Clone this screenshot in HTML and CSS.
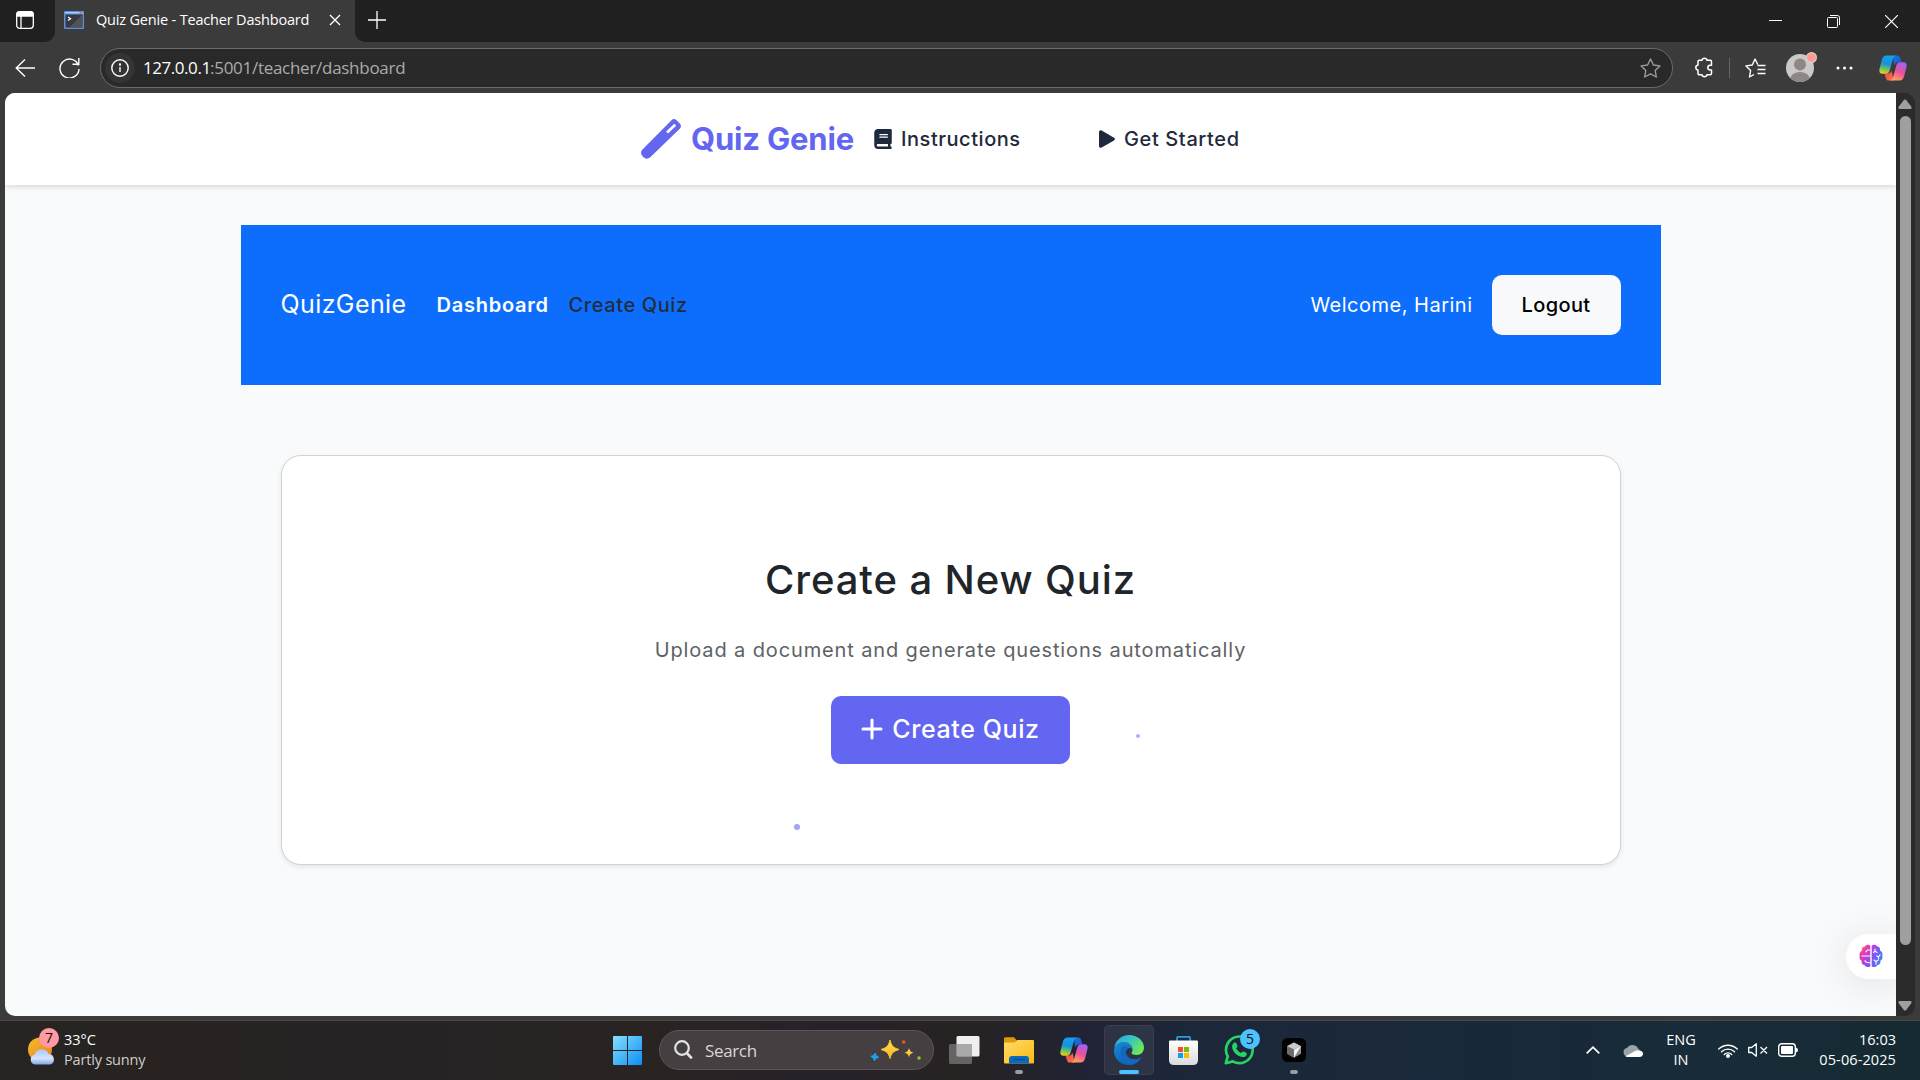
FILE: index.html
```html
<!DOCTYPE html>
<html lang="en">
<head>
<meta charset="utf-8">
<title>Quiz Genie - Teacher Dashboard</title>
<link rel="stylesheet" href="styles.css">
</head>
<body>
<svg class="defs" width="0" height="0" aria-hidden="true">
  <defs>
    <linearGradient id="cpBlue" x1="0.5" y1="0" x2="0.3" y2="1"><stop offset="0" stop-color="#14a0ef"/><stop offset=".45" stop-color="#1791dc"/><stop offset=".7" stop-color="#58bd72"/><stop offset="1" stop-color="#f3cd18"/></linearGradient>
    <linearGradient id="cpPink" x1="0.7" y1="0" x2="0.3" y2="1"><stop offset="0" stop-color="#a163f2"/><stop offset=".5" stop-color="#ec4f9c"/><stop offset="1" stop-color="#ffa35c"/></linearGradient>
    <linearGradient id="cpTop" x1="0" y1="0" x2="1" y2="1"><stop offset="0" stop-color="#1479dc"/><stop offset="1" stop-color="#2450d0"/></linearGradient>
    <linearGradient id="cpBot" x1="0" y1="0" x2="1" y2="1"><stop offset="0" stop-color="#e93d52"/><stop offset="1" stop-color="#ff7a3c"/></linearGradient>
    <linearGradient id="win" x1="0" y1="0" x2="1" y2="1"><stop offset="0" stop-color="#85e0fc"/><stop offset="1" stop-color="#0b8ef6"/></linearGradient>
    <linearGradient id="sun" x1="0" y1="0" x2="1" y2="1"><stop offset="0" stop-color="#f5bd2f"/><stop offset="1" stop-color="#ee7d16"/></linearGradient>
    <linearGradient id="cloud" x1="0" y1="0" x2="0" y2="1"><stop offset="0" stop-color="#a9c6f5"/><stop offset=".6" stop-color="#d6e4fb"/><stop offset="1" stop-color="#7fa6e8"/></linearGradient>
    <linearGradient id="folder" x1="0" y1="0" x2="1" y2="1"><stop offset="0" stop-color="#ffdc69"/><stop offset="1" stop-color="#fbba12"/></linearGradient>
    <linearGradient id="edgeTop" x1="0" y1="0" x2="1" y2=".6"><stop offset="0" stop-color="#2aa7e0"/><stop offset=".5" stop-color="#35c4c4"/><stop offset="1" stop-color="#6bea56"/></linearGradient>
    <linearGradient id="edgeBot" x1="0" y1="0" x2=".7" y2="1"><stop offset="0" stop-color="#1b88dc"/><stop offset="1" stop-color="#0d5cb0"/></linearGradient>
    <linearGradient id="bag" x1="0" y1="0" x2="0" y2="1"><stop offset="0" stop-color="#ffffff"/><stop offset="1" stop-color="#d9dadd"/></linearGradient>
    <linearGradient id="brainL" x1="0" y1="0" x2=".6" y2="1"><stop offset="0" stop-color="#ffa21c"/><stop offset=".4" stop-color="#f038b0"/><stop offset="1" stop-color="#8a4df5"/></linearGradient>
    <linearGradient id="brainR" x1="0" y1="0" x2="1" y2="1"><stop offset="0" stop-color="#c23fe0"/><stop offset=".5" stop-color="#6a60f5"/><stop offset="1" stop-color="#2aa4ff"/></linearGradient>
    <linearGradient id="gold" x1="0" y1="0" x2="0" y2="1"><stop offset="0" stop-color="#ffe25a"/><stop offset="1" stop-color="#fbb41a"/></linearGradient>
    <symbol id="copilot" viewBox="0 0 28 26">
      <path d="M14 0.5h4.2c1.6 0 2.5 1 3 2.6l1.4 4.4h-3.5c-2 0-2.900 1-3.500 3l-1-4z" fill="url(#cpTop)"/>
      <path d="M14 25.500H9.800c-1.600 0-2.500-1-3-2.600L5.400 18.500H9c2 0 2.900-1 3.500-3l1 4z" fill="url(#cpBot)"/>
      <path d="M7.500.5H17c-1.800.3-2.600 1.900-3.200 4l-3 10.500c-.7 2.500-1.800 3.700-4 3.700H3.500C1 18.700-.1 17 .5 14L2.800 5C3.600 2 5 .5 7.500.5Z" fill="url(#cpBlue)"/>
      <path d="M20.500 25.500H11c1.800-.3 2.600-1.900 3.200-4l3-10.500c.7-2.500 1.800-3.700 4-3.700h3.300c2.500 0 3.600 1.700 3 4.700L25.200 21c-.8 3-2.200 4.500-4.700 4.500Z" fill="url(#cpPink)"/>
    </symbol>
  </defs>
</svg>

<div class="titlebar">
  <div class="tab-actions">
    <svg width="18" height="18" viewBox="0 0 18 18" fill="none" stroke="#fff" stroke-width="1.300"><rect x=".7" y=".7" width="16.600" height="16.600" rx="3"/><path d="M1 2.500Q1 1 3 1H15Q17 1 17 2.500V5H1Z" fill="#fff"/><path d="M5 5v12"/></svg>
  </div>
  <div class="tab">
    <svg width="20" height="18" viewBox="0 0 20 18"><rect width="20" height="18" rx="1" fill="#5b8fdc"/><rect x="1" y="1" width="18" height="1.500" fill="#a4cbf5"/><rect x="15.500" y="1" width="2.500" height="1.500" fill="#e35b4c"/><rect x="1.500" y="3.500" width="17" height="13" fill="#363a40"/><path d="M18.500 3.500v13h-13z" fill="#505358"/><path d="M4 6l2.500 1.800L4 9.500" fill="none" stroke="#fff" stroke-width="1.300"/></svg>
    <span class="tab-title">Quiz Genie - Teacher Dashboard</span>
    <svg class="tab-close" width="12" height="12" viewBox="0 0 12 12" stroke="#fff" stroke-width="1.400"><path d="M1 1l10 10M11 1L1 11"/></svg>
  </div>
  <svg class="new-tab" width="18" height="18" viewBox="0 0 18 18" stroke="#fff" stroke-width="1.300"><path d="M9 0v18M0 9h18"/></svg>
  <div class="window-buttons">
    <svg width="13" height="13" viewBox="0 0 13 13" stroke="#fff" stroke-width="1"><path d="M0 5.500h13"/></svg>
    <svg width="13" height="13" viewBox="0 0 13 13" fill="none" stroke="#fff" stroke-width="1"><rect x=".5" y="2.500" width="10" height="10" rx="1"/><path d="M3 .5h7.500a2 2 0 0 1 2 2V10"/></svg>
    <svg width="13" height="13" viewBox="0 0 13 13" stroke="#fff" stroke-width="1.200"><path d="M0 0l13 13M13 0L0 13"/></svg>
  </div>
</div>

<div class="toolbar">
  <svg class="back" width="20" height="20" viewBox="0 0 20 20" fill="none" stroke="#fff" stroke-width="1.400"><path d="M20 10H1M10 1.500L1.200 10l8.800 8.500"/></svg>
  <svg class="reload" width="21" height="21" viewBox="0 0 21 21" fill="none" stroke="#fff" stroke-width="1.400"><path d="M19.500 8.500A9.500 9.500 0 1 0 20 12M19.800 1v6.300h-6.300"/></svg>
  <div class="address">
    <span class="site-info"><svg width="18" height="18" viewBox="0 0 18 18" fill="none" stroke="#fff" stroke-width="1.400"><circle cx="9" cy="9" r="8.200"/><path d="M9 8v5"/><circle cx="9" cy="5.500" r=".5" fill="#fff"/></svg></span>
    <span class="host">127.0.0.1</span><span class="path">:5001/teacher/dashboard</span>
    <svg class="fav" width="21" height="20" viewBox="0 0 21 20" fill="none" stroke="#9c9c9c" stroke-width="1.400" stroke-linejoin="round"><path d="M10.500 1l2.900 6 6.500.9-4.700 4.600 1.100 6.500-5.800-3.100-5.800 3.100 1.100-6.500L1.100 7.900l6.500-.9z"/></svg>
  </div>
  <svg class="ext" width="19" height="21" viewBox="0 0 19 21" fill="none" stroke="#fff" stroke-width="1.500" stroke-linejoin="round"><path d="M17.500 8.200V4.500a1.200 1.200 0 0 0-1.200-1.200H13a2.600 2.600 0 0 0-5.100 0H5.200A1.200 1.200 0 0 0 4 4.500v3.400a2.700 2.700 0 0 0 0 5.300v3.300a1.200 1.200 0 0 0 1.200 1.200h2.700a2.600 2.600 0 0 0 5.100 0h3.300a1.200 1.200 0 0 0 1.200-1.200V13h-1.300a2.400 2.400 0 0 1 0-4.800z"/></svg>
  <span class="divider"></span>
  <svg class="favs" width="21" height="20" viewBox="0 0 21 20" fill="none" stroke="#fff" stroke-width="1.400" stroke-linejoin="round"><path d="M12.800 6.500L10 1 7.300 7 1 7.900l4.600 4.600L4.500 19l4.500-2.500M12.500 7.500H20.500M12.500 11.500h8M12.500 15.500h8"/></svg>
  <div class="profile">
    <svg width="28" height="28" viewBox="0 0 28 28"><clipPath id="av"><circle cx="14" cy="14" r="14"/></clipPath><g clip-path="url(#av)"><rect width="28" height="28" fill="#cbc9c7"/><circle cx="14" cy="10.500" r="6" fill="#8d8885"/><ellipse cx="14" cy="25.500" rx="10" ry="7.500" fill="#8d8885"/></g></svg>
    <span class="profile-dot"></span>
  </div>
  <svg class="more" width="17" height="4" viewBox="0 0 17 4" fill="#fff"><circle cx="2" cy="2" r="1.500"/><circle cx="8.500" cy="2" r="1.500"/><circle cx="15" cy="2" r="1.500"/></svg>
  <svg class="copilot-btn" width="28" height="26"><use href="#copilot"/></svg>
</div>

<div class="frame">
  <div class="page">
    <header class="site-header">
      <svg class="wand" width="42" height="42" viewBox="0 0 42 42"><path fill="#6366f1" d="M31.500 2.200Q34 0 36.500 2.200L39.800 5.500Q42 8 40 10.500L10 39.500Q6.500 41.800 3.800 39.500L2.200 37.800Q0 35 2 32Z"/><path fill="#fff" d="M34.300 5.800l1.900 1.900-8.200 7.800-1.900-1.900z"/></svg>
      <span class="brand">Quiz Genie</span>
      <svg class="book" width="18" height="20" viewBox="0 0 448 512" fill="#1e293b"><path d="M96 0C43 0 0 43 0 96v320c0 53 43 96 96 96h320c17.700 0 32-14.300 32-32s-14.300-32-32-32v-64c17.700 0 32-14.300 32-32V32c0-17.700-14.300-32-32-32H96zm0 384h256v64H96c-17.700 0-32-14.300-32-32s14.300-32 32-32zm32-240c0-8.800 7.200-16 16-16h192c8.800 0 16 7.200 16 16s-7.200 16-16 16H144c-8.800 0-16-7.200-16-16zm16 48h192c8.800 0 16 7.200 16 16s-7.200 16-16 16H144c-8.800 0-16-7.200-16-16s7.200-16 16-16z"/></svg>
      <span class="menu-item instructions">Instructions</span>
      <svg class="play" width="16" height="18" viewBox="0 0 16 18" fill="#1e293b"><path d="M0 1.900C0 .5 1.500-.3 2.700.4L15 7.700c1.200.7 1.200 2 0 2.700L2.700 17.600C1.500 18.300 0 17.500 0 16.100Z"/></svg>
      <span class="menu-item">Get Started</span>
    </header>

    <nav class="navbar">
      <span class="nav-brand">QuizGenie</span>
      <span class="nav-link active">Dashboard</span>
      <span class="nav-link">Create Quiz</span>
      <span class="welcome">Welcome, Harini</span>
      <button class="logout">Logout</button>
    </nav>

    <section class="card">
      <h1 class="card-title">Create a New Quiz</h1>
      <p class="card-text">Upload a document and generate questions automatically</p>
      <button class="create">
        <svg width="22" height="22" viewBox="0 0 22 22" stroke="#fff" stroke-width="3" stroke-linecap="round"><path d="M11 2v18M2 11h18"/></svg>
        <span>Create Quiz</span>
      </button>
    </section>

    <i class="particle particle-a"></i>
    <i class="particle particle-b"></i>
    <div class="assistant">
      <svg width="24" height="24" viewBox="0 0 24 24"><path fill="url(#brainL)" d="M11.300 1.800v20.400C10 23.500 7 23.500 5.800 21.200 3.500 21 2 19 2.700 16.800.8 15.800 0 13.800.7 12 0 9.500 1 7.500 2.800 6.800 2.500 4 4 2.500 5.800 2.500 7 .3 10 .3 11.300 1.800z"/><path fill="url(#brainR)" d="M12.700 1.800v20.400c1.300 1.300 4.300 1.300 5.500-1 2.300-.2 3.800-2.200 3.100-4.400 1.900-1 2.700-3 2-4.800.7-2.500-.3-4.500-2.100-5.200.3-2.800-1.200-4.300-3-4.300-1.200-2.200-4.200-2.200-5.500-.7z"/><g fill="none" stroke="#fff" stroke-width="1.100" stroke-linecap="round"><path d="M11 6H8.500L6.800 7.800M3 12h8M6 16.500c0 2 2.500 2.200 5 2.200M16 5v2l-1.500 1.500M16 7l2 1.500M17.500 12l2 .8 1.500-2M19.500 12.800V15M15 16l2 1.500V20M17 17.500l2-1.200"/></g></svg>
    </div>
  </div>
  <div class="scrollbar">
    <svg width="14" height="10" viewBox="0 0 14 10" fill="#9f9f9f"><path d="M6 .8Q7 0 8 .8L13.500 8Q14 10 12.500 10H1.500Q0 10 .5 8Z"/></svg>
    <span class="thumb"></span>
    <svg class="down" width="14" height="10" viewBox="0 0 14 10" fill="#9f9f9f"><path d="M6 9.200Q7 10 8 9.200L13.500 2Q14 0 12.500 0H1.500Q0 0 .5 2Z"/></svg>
  </div>
</div>

<div class="taskbar">
  <div class="weather">
    <div class="weather-icon">
      <svg width="28" height="28" viewBox="0 0 28 28"><circle cx="12" cy="12.500" r="12" fill="url(#sun)"/><path d="M7 27.500a5 5 0 0 1-.5-9.800 7.500 7.500 0 0 1 14.200-.6A5.300 5.300 0 0 1 22 27.500z" fill="url(#cloud)"/></svg>
      <span class="badge badge-pink">7</span>
    </div>
    <div class="weather-text"><span>33°C</span><span class="dim">Partly sunny</span></div>
  </div>

  <div class="apps">
    <svg width="29" height="29" viewBox="0 0 29 29" fill="url(#win)"><path d="M1 0h13v14H0V1q0-1 1-1zM15 0h13q1 0 1 1v13H15zM0 15h14v14H1q-1 0-1-1zM15 15h14v13q0 1-1 1H15z"/></svg>
    <div class="search">
      <svg width="19" height="20" viewBox="0 0 19 20" fill="none" stroke="#e4e4e4" stroke-width="2.200"><circle cx="8" cy="8" r="6.800"/><path d="M12.800 13l5 5.300" stroke-width="2.600"/></svg>
      <span class="search-label">Search</span>
      <svg class="sparkles" width="52" height="22" viewBox="0 0 52 22"><path fill="url(#gold)" d="M20 1c1.500 6 3 7.500 9 9.500-6 2-7.500 3.500-9 9-1.500-5.500-3-7-9-9 6-2 7.500-3.500 9-9.500z" stroke="#fcc22c"/><path fill="url(#gold)" d="M39 9c.8 3 1.500 3.800 4.500 4.700-3 .9-3.700 1.700-4.500 4.700-.8-3-1.500-3.800-4.500-4.700 3-.9 3.700-1.700 4.500-4.700z"/><path fill="#1aa0ec" d="M5.200 14l1 2.600 2.500 1.700-2.600 1-1.700 2.500-1-2.700L.800 17.400l2.700-1z" stroke="#1aa0ec"/><circle cx="33.700" cy="3" r="1.800" fill="#ea5a2b"/><circle cx="49" cy="19" r="1.800" fill="#8cc63f"/></svg>
    </div>
    <svg class="taskview" width="31" height="28" viewBox="0 0 31 28"><rect x="7.500" width="23" height="20.500" rx="1.500" fill="#efefef"/><rect y="8" width="23" height="20" rx="1.500" fill="#777" fill-opacity=".78"/><path d="M7.500 8H23v12.500H9q-1.500 0-1.500-1.500z" fill="#aaa9a9"/></svg>
    <div class="app folder"><svg width="30" height="27" viewBox="0 0 30 27"><path d="M0 1.500Q0 .3 1.500.3H10l3 3.500h15V8H0z" fill="#dd9b05"/><path d="M1 5.500H10.500L13.500 3H29q1 0 1 1V25.500q0 1-1 1H1q-1 0-1-1v-19q0-1 1-1z" fill="url(#folder)"/><path d="M5 26.500V22q0-3 3-3H22q3 0 3 3v4.500z" fill="#0d69c0"/><path d="M9 22.500h12" stroke="#0a4a94" stroke-width="1.300"/></svg><i class="run"></i></div>
    <svg class="copilot-app" width="28" height="26"><use href="#copilot"/></svg>
    <div class="app edge"><svg width="30" height="30" viewBox="0 0 30 30"><path fill="url(#edgeBot)" d="M0 15C1 9 6 6 11 7c4 .5 7 3 7 7-2-2-5-1-6 2-1 5 4 9 9 8.500 3-.3 5-1.200 6.500-2.500C25 27 20 30 15 30 6 30-.5 23 0 15z"/><path fill="#1268bd" d="M8 12c-3 5-1.500 13 8 17.900 5-.3 9.500-3.400 11.500-7.900-1.500 1.500-4 2.500-6.500 2.500-5 0-10-3.500-9-8.500.3-1.500 1-2.400 2-3-2-2.500-5-2-6-1z"/><path fill="url(#edgeTop)" d="M.3 12.500C1.500 5.500 7.500 0 15 0c8.500 0 15 6 15 12.500 0 4.500-3 7.500-7.500 7.500-3 0-5-.8-5-2 0-1 1-1.500 1-3.500C18.500 10 13.500 6.500 9 7 5 7.300 2 9.500.3 12.500z"/></svg><i class="run run-active"></i></div>
    <svg class="store" width="29" height="29" viewBox="0 0 29 29"><path d="M8 6V2q0-1.200 1.200-1.200H20q1.200 0 1.200 1.200v4" fill="none" stroke="#20a3e0" stroke-width="1.700"/><path d="M1 4.500H28q1 0 1 1V24q0 5-5 5H5q-5 0-5-5V5.500q0-1 1-1z" fill="url(#bag)"/><path d="M9 11h5v5H9z" fill="#f25022"/><path d="M15 11h5v5h-5z" fill="#7fba00"/><path d="M9 17h5v5H9z" fill="#00a4ef"/><path d="M15 17h5v5h-5z" fill="#ffb900"/></svg>
    <div class="whatsapp"><svg width="30" height="30" viewBox="0 0 30 30"><path d="M1.800 28.200l2-6.800A13.300 13.300 0 1 1 8.800 26.400z" fill="none" stroke="#25d366" stroke-width="2.700" stroke-linejoin="round"/><path fill="#25d366" d="M10.300 7.500q1.500-.5 2.200 1l.9 2.400q.3.800-.3 1.400l-.9 1c1 2.200 2.700 3.800 4.900 4.700l1-1.100q.6-.7 1.400-.4l2.400 1q1.200.6.800 2c-.6 2-2.400 2.800-4.400 2.500-5.300-.9-9.800-5.300-10.200-10-.1-2.200.8-3.900 2.200-4.500z"/></svg><span class="badge badge-blue">5</span></div>
    <div class="app cursor"><svg width="24" height="24" viewBox="0 0 24 24"><rect width="24" height="24" rx="5.500" fill="#020202"/><path d="M12 4.500l7 3.700v7.500l-7 4-7-4V8.200z" fill="#8c8c8c"/><path d="M12 4.500l7 3.700-7 3-7-3z" fill="#c9c9c9"/><path d="M19 8.200L12 19.500v-7.800z" fill="#f5f5f5"/><path d="M5 8.200l7 3.500v8L5 15.700z" fill="#6d6d6d"/></svg><i class="run"></i></div>
  </div>

  <div class="tray">
    <svg class="chev" width="14" height="8" viewBox="0 0 14 8" fill="none" stroke="#fff" stroke-width="1.700"><path d="M.7 7.300L7 1.200l6.300 6.100"/></svg>
    <svg class="onedrive" width="20" height="13" viewBox="0 0 20 13"><path d="M4.500 12.500A4.300 4.300 0 0 1 4 4 6.500 6.500 0 0 1 15.500 5a4 4 0 0 1 0 7.500z" fill="#9aa3a8"/><path d="M2.500 12.300L13 6.500q7-.5 7 3 0 3.500-4 3.500H4.500q-1.500 0-2-.7z" fill="#fff"/></svg>
    <div class="lang"><span>ENG</span><span>IN</span></div>
    <svg class="wifi" width="20" height="15" viewBox="0 0 20 15" fill="none" stroke="#fff" stroke-width="1.400" stroke-linecap="round"><path d="M.8 6a13 13 0 0 1 18.400 0M3.500 8.800a9.200 9.200 0 0 1 13 0M6.300 11.400a5.300 5.300 0 0 1 7.400 0"/><circle cx="10" cy="13" r="1.300" fill="#fff"/></svg>
    <svg class="mute" width="20" height="14" viewBox="0 0 20 14" fill="none" stroke="#fff" stroke-width="1.300" stroke-linejoin="round"><path d="M.7 4.500h3L8.300.8v12.400L3.700 9.500h-3zM12.500 4l6.500 6.500M19 4l-6.500 6.500"/></svg>
    <svg class="battery" width="21" height="14" viewBox="0 0 21 14"><rect x=".7" y=".7" width="16.600" height="12.600" rx="3" fill="none" stroke="#fff" stroke-width="1.400"/><rect x="3" y="3" width="12" height="8" rx="1" fill="#fff"/><path d="M18 4.500q2 .5 2 2.500t-2 2.500z" fill="#fff"/></svg>
    <div class="clock"><span>16:03</span><span class="date">05-06-2025</span></div>
  </div>
</div>
</body>
</html>
```
FILE: styles.css
```css
* { box-sizing: border-box; }
body {
  margin: 0;
  width: 1920px;
  height: 1080px;
  overflow: hidden;
  display: flex;
  flex-direction: column;
  background: #3b3b3b;
  font-family: "Open Sans", "Noto Sans", sans-serif;
  color: #fff;
  white-space: nowrap;
}
svg { display: block; flex: none; }
.defs { position: absolute; }

/* Tab strip */
.titlebar {
  height: 42px;
  flex: none;
  display: flex;
  background: linear-gradient(90deg, #3b3b3b 365px, #202020 365px);
}
.tab-actions {
  width: 55px;
  padding: 11px 0 0 16px;
  background: #202020;
  border-bottom-right-radius: 10px;
}
.tab {
  width: 300px;
  display: flex;
  align-items: center;
  padding: 0 14px 2px 9px;
  background: #3b3b3b;
  border-radius: 10px 10px 0 0;
}
.tab-title {
  width: 235px;
  margin-left: 12px;
  padding-bottom: 2px;
  font-size: 14.5px;
  letter-spacing: -0.18px;
}
.new-tab {
  width: 58px;
  height: 42px;
  padding: 11px 27px 13px 13px;
  background: #202020;
  border-bottom-left-radius: 10px;
}
.window-buttons {
  flex: 1;
  display: flex;
  justify-content: flex-end;
  gap: 45px;
  padding: 15px 22px 0 0;
  background: #202020;
}

/* Toolbar */
.toolbar {
  height: 51px;
  flex: none;
  display: flex;
  align-items: center;
  padding-left: 15px;
  background: #3b3b3b;
}
.reload { margin-left: 24px; }
.address {
  width: 1573px;
  height: 40px;
  margin-left: 20px;
  display: flex;
  align-items: center;
  padding: 0 11px 0 4px;
  background: #292929;
  border: 1px solid #6b6b6b;
  border-radius: 20px;
  font-size: 17px;
}
.site-info {
  width: 30px;
  height: 30px;
  display: grid;
  place-items: center;
  background: #343434;
  border-radius: 15px;
}
.host { width: 67px; margin-left: 8px; letter-spacing: -0.45px; }
.path { color: #ababab; letter-spacing: -0.28px; }
.fav { margin-left: auto; }
.ext { margin-left: 21px; }
.divider { width: 1px; height: 20px; margin-left: 16px; background: #656565; }
.favs { margin-left: 15px; }
.profile { position: relative; margin-left: 20px; }
.profile-dot {
  position: absolute;
  top: -1px;
  right: -2px;
  width: 9px;
  height: 9px;
  border-radius: 50%;
  background: #ff9c94;
  box-shadow: 0 0 0 1px #d9d4d0;
}
.more { margin-left: 22px; }
.copilot-btn { margin-left: 26px; }

/* Browser viewport */
.frame {
  height: 923px;
  flex: none;
  display: flex;
  margin: 0 5px;
}
.page {
  position: relative;
  width: 1891px;
  overflow: hidden;
  display: flex;
  flex-direction: column;
  align-items: center;
  background: #f8fafc;
  border-radius: 10px 0 0 10px;
  font-family: Inter, "Noto Sans", sans-serif;
}
.scrollbar {
  width: 19px;
  display: flex;
  flex-direction: column;
  align-items: center;
  padding: 6px 1px 5px 0;
  background: #2b2b2b;
  border-radius: 0 10px 10px 0;
}
.thumb { width: 11px; height: 829px; margin-top: 7px; border-radius: 6px; background: #9f9f9f; }
.down { margin-top: auto; }

.site-header {
  width: 100%;
  height: 92px;
  flex: none;
  display: flex;
  align-items: center;
  padding-left: 635px;
  background: #fff;
  box-shadow: 0 2px 5px rgba(0, 0, 0, 0.13);
  color: #1e293b;
}
.brand {
  width: 163px;
  margin-left: 9px;
  padding-bottom: 1px;
  color: #6366f1;
  font-size: 31px;
  font-weight: 700;
  letter-spacing: -0.18px;
}
.book { margin-left: 20px; }
.menu-item { margin-left: 9px; font-size: 20px; font-weight: 500; letter-spacing: 0.62px; }
.instructions { width: 198px; letter-spacing: 0.55px; }

.navbar {
  width: 1420px;
  height: 160px;
  flex: none;
  margin-top: 40px;
  display: flex;
  align-items: center;
  padding: 0 40px;
  background: #0d6efd;
  font-size: 20px;
}
.nav-brand { width: 156px; padding-bottom: 3px; font-size: 25px; letter-spacing: 0.4px; }
.nav-link { color: #212d3c; font-weight: 500; letter-spacing: 0.6px; }
.nav-link.active { width: 132px; color: #fff; font-weight: 600; letter-spacing: 0.75px; }
.welcome { margin-left: auto; letter-spacing: 0.5px; }
.logout {
  width: 129px;
  height: 60px;
  margin-left: 19px;
  padding: 0;
  border: 0;
  border-radius: 10px;
  background: #f8f9fa;
  color: #000;
  font: 500 20px Inter, sans-serif;
  letter-spacing: 0.4px;
}

.card {
  width: 1340px;
  height: 410px;
  flex: none;
  margin-top: 70px;
  display: flex;
  flex-direction: column;
  align-items: center;
  padding-top: 94px;
  background: #fff;
  border: 1px solid #d0d2d4;
  border-radius: 20px;
  box-shadow: 0 2px 5px rgba(0, 0, 0, 0.09);
}
.card-title {
  margin: 0;
  color: #212529;
  font-size: 40px;
  font-weight: 500;
  line-height: 60px;
  letter-spacing: 0.9px;
}
.card-text { margin: 25px 0 0; color: #5e6265; font-size: 20px; line-height: 30px; letter-spacing: 0.87px; }
.create {
  width: 239px;
  height: 68px;
  margin-top: 31px;
  display: flex;
  align-items: center;
  justify-content: center;
  gap: 9px;
  padding: 0 0 2px;
  border: 0;
  border-radius: 10px;
  background: #6366f1;
  color: #fff;
  font: 500 25px Inter, sans-serif;
  letter-spacing: 0.6px;
}

.particle { position: absolute; border-radius: 50%; background: #6366f1; }
.particle-a { left: 1131px; top: 641px; width: 4px; height: 4px; opacity: 0.5; }
.particle-b { left: 789px; top: 731px; width: 6px; height: 6px; opacity: 0.6; }
.assistant {
  position: absolute;
  right: 0;
  top: 841px;
  width: 50px;
  height: 45px;
  padding: 10px 0 0 13px;
  background: #fff;
  border-radius: 23px 0 0 23px;
  box-shadow: 0 5px 40px rgba(0, 0, 0, 0.11);
}

/* Taskbar */
.taskbar {
  height: 60px;
  flex: none;
  margin-top: 4px;
  display: flex;
  background: linear-gradient(90deg, #272423 0%, #282321 8%, #272325 20%, #292422 34%, #27212a 43%, #272322 50%, #212333 56%, #1c273a 62%, #18293a 80%, #172c38 90%, #152a32 100%);
  border-top: 1px solid #484646;
  font-size: 14.5px;
}
.weather { width: 611px; display: flex; padding: 16px 0 0 28px; }
.weather-icon { position: relative; width: 28px; height: 28px; }
.badge {
  position: absolute;
  width: 20px;
  height: 20px;
  border-radius: 50%;
  color: #111;
  font-size: 14px;
  line-height: 20px;
  text-align: center;
}
.badge-pink { left: 11px; top: -9px; background: #ff99a4; }
.badge-blue { left: 16px; top: -6px; background: #4cc2ff; }
.weather-text {
  display: flex;
  flex-direction: column;
  margin: -7px 0 0 8px;
  line-height: 20px;
}
.dim { color: #cfcdcd; letter-spacing: -0.17px; }
.apps { display: flex; align-items: center; width: 970px; padding: 0 0 1px 2px; }
.search {
  width: 275px;
  height: 40px;
  margin-left: 17px;
  display: flex;
  align-items: center;
  padding: 0 11px 0 14px;
  background: #453f41;
  border: 1px solid #5c5557;
  border-radius: 20px;
}
.search-label { margin-left: 12px; color: #d8d6d6; font-size: 17px; letter-spacing: -0.35px; }
.sparkles { margin-left: auto; }
.taskview { margin-left: 15px; }
.app { position: relative; display: grid; place-items: center; }
.folder { margin-left: 24px; }
.run {
  position: absolute;
  bottom: -10px;
  left: calc(50% - 4px);
  width: 8px;
  height: 4px;
  border-radius: 2px;
  background: #9c9b9d;
}
.copilot-app { margin-left: 26px; }
.edge {
  width: 50px;
  height: 50px;
  margin-left: 16px;
  background: rgba(255, 255, 255, 0.07);
  border: 1px solid rgba(255, 255, 255, 0.06);
  border-radius: 5px;
}
.run-active { bottom: 0; left: calc(50% - 10px); width: 20px; background: #4cc2ff; }
.store { margin-left: 15px; }
.whatsapp { position: relative; margin-left: 26px; }
.cursor { margin-left: 28px; }
.cursor .run { bottom: -12px; }

.tray { display: flex; align-items: center; padding: 0 0 1px 5px; }
.onedrive { margin-left: 23px; }
.lang { width: 50px; margin-left: 13px; text-align: center; line-height: 20px; }
.lang span, .clock span { display: block; }
.wifi { margin-left: 12px; }
.mute { margin-left: 10px; }
.battery { margin-left: 10px; }
.clock { width: 80px; margin-left: 17px; padding-bottom: 1px; text-align: right; line-height: 20px; }
.date { letter-spacing: 0.1px; }
```
